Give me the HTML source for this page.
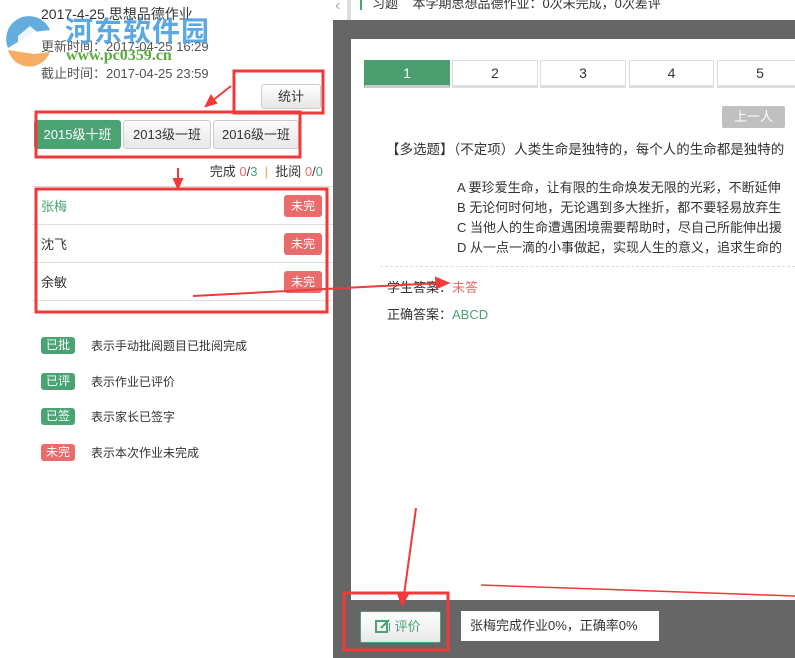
<!DOCTYPE html>
<html><head><meta charset="utf-8">
<style>
*{margin:0;padding:0;box-sizing:border-box}
body{width:795px;height:658px;overflow:hidden;background:#fff;font-family:"Liberation Sans","Noto Sans CJK SC",sans-serif;position:relative;color:#333}
.a{position:absolute;white-space:nowrap}
.badge{position:absolute;color:#fff;font-size:12px;text-align:center;border-radius:3px}
.g{background:#4aa373}.r{background:#e96b6b}
.tab{position:absolute;top:120px;height:29px;border:1px solid #ccc;border-radius:3px;background:linear-gradient(#fafafa,#e8e8e8);font-size:13px;line-height:27px;text-align:center;color:#333}
.num{position:absolute;top:60px;height:28px;border:1px solid #ddd;border-bottom:3px solid #ddd;font-size:14px;line-height:25px;text-align:center;background:#fff}
</style></head><body>
<div class="a" style="left:41px;top:4px;font-size:14px;color:#333">2017-4-25 思想品德作业</div>
<div class="a" style="left:41px;top:36px;font-size:13px;color:#555">更新时间：2017-04-25 16:29</div>
<div class="a" style="left:41px;top:63px;font-size:13px;color:#555">截止时间：2017-04-25 23:59</div>
<svg class="a" style="left:4px;top:10px" width="52" height="58" viewBox="0 0 52 58">
<path d="M4 38 A22 22 0 0 1 46 20 L30 22 Z" fill="#4a9fd8" opacity=".85"/>
<path d="M14 26 L26 16 L38 26 L38 38 L14 38 Z" fill="#fff" opacity=".9"/>
<path d="M4 40 A22 22 0 0 0 46 42 L30 44 Z" fill="#f5a04a" opacity=".85"/>
</svg>
<div class="a" style="left:65px;top:10px;font-size:28px;font-weight:bold;color:#4a9fe0;font-family:'Noto Sans CJK SC',sans-serif;opacity:.9;letter-spacing:1px">河东软件园</div>
<div class="a" style="left:66px;top:47px;font-size:16px;font-weight:bold;color:#5aab3c;font-family:'Liberation Serif',serif">www.pc0359.cn</div>

<div class="a" style="left:261px;top:84px;width:60px;height:25px;border:1px solid #ccc;border-radius:3px;background:linear-gradient(#fff,#e6e6e6);font-size:13px;line-height:23px;text-align:center">统计</div>

<div class="tab" style="left:34px;width:87px;background:#4aa373;color:#fff;border-color:#4aa373">2015级十班</div>
<div class="tab" style="left:123px;width:88px">2013级一班</div>
<div class="tab" style="left:213px;width:86px">2016级一班</div>

<div class="a" style="right:472px;top:161px;font-size:13px;color:#333">完成 <span style="color:#e96b6b">0</span>/<span style="color:#4aa373">3</span> &nbsp;<span style="color:#f0a040">|</span>&nbsp; 批阅 <span style="color:#e96b6b">0</span>/<span style="color:#4aa373">0</span></div>

<div class="a" style="left:32px;top:186px;width:301px;border-top:1px solid #ddd"></div>
<div class="a" style="left:32px;top:224px;width:301px;border-top:1px solid #ddd"></div>
<div class="a" style="left:32px;top:262px;width:301px;border-top:1px solid #ddd"></div>
<div class="a" style="left:32px;top:300px;width:301px;border-top:1px solid #ddd"></div>
<div class="a" style="left:41px;top:196px;font-size:13px;color:#4aa373">张梅</div>
<div class="a" style="left:41px;top:234px;font-size:13px">沈飞</div>
<div class="a" style="left:41px;top:272px;font-size:13px">余敏</div>
<div class="badge r" style="left:284px;top:195px;width:38px;height:22px;line-height:22px">未完</div>
<div class="badge r" style="left:284px;top:233px;width:38px;height:22px;line-height:22px">未完</div>
<div class="badge r" style="left:284px;top:271px;width:38px;height:22px;line-height:22px">未完</div>

<div class="badge g" style="left:41px;top:337px;width:34px;height:17px;line-height:17px">已批</div>
<div class="badge g" style="left:41px;top:373px;width:34px;height:17px;line-height:17px">已评</div>
<div class="badge g" style="left:41px;top:408px;width:34px;height:17px;line-height:17px">已签</div>
<div class="badge r" style="left:41px;top:444px;width:34px;height:17px;line-height:17px">未完</div>
<div class="a" style="left:91px;top:337px;font-size:12px">表示手动批阅题目已批阅完成</div>
<div class="a" style="left:91px;top:373px;font-size:12px">表示作业已评价</div>
<div class="a" style="left:91px;top:408px;font-size:12px">表示家长已签字</div>
<div class="a" style="left:91px;top:444px;font-size:12px">表示本次作业未完成</div>

<div class="a" style="left:333px;top:20px;width:18px;height:638px;background:#666"></div>
<div class="a" style="left:333px;top:20px;width:462px;height:19px;background:#666"></div>
<div class="a" style="left:333px;top:600px;width:462px;height:58px;background:#666"></div>
<div class="a" style="left:347px;top:0;width:4px;height:20px;background:#ddd"></div>
<div class="a" style="left:335px;top:-3px;font-size:16px;color:#aaa">‹</div>
<div class="a" style="left:360px;top:0;width:2px;height:10px;background:#4aa373"></div>
<div class="a" style="left:372px;top:-7px;font-size:13px;color:#333">习题 &nbsp;&nbsp;&nbsp;本学期思想品德作业：0次未完成，0次差评</div>

<div class="num" style="left:364px;width:86px;background:#4a9e6f;border-color:#4a9e6f;border-bottom-color:#ccc;color:#fff">1</div>
<div class="num" style="left:452px;width:86px">2</div>
<div class="num" style="left:540px;width:86px">3</div>
<div class="num" style="left:629px;width:85px">4</div>
<div class="num" style="left:717px;width:86px">5</div>

<div class="a" style="left:722px;top:106px;width:63px;height:22px;background:#c0c0c0;border-radius:2px;color:#fff;font-size:13px;line-height:22px;text-align:center">上一人</div>

<div class="a" style="left:386px;top:138px;font-size:13.5px">【多选题】（不定项）人类生命是独特的，每个人的生命都是独特的</div>
<div class="a" style="left:457px;top:178px;font-size:13px;line-height:20px">A 要珍爱生命，让有限的生命焕发无限的光彩，不断延伸<br>B 无论何时何地，无论遇到多大挫折，都不要轻易放弃生<br>C 当他人的生命遭遇困境需要帮助时，尽自己所能伸出援<br>D 从一点一滴的小事做起，实现人生的意义，追求生命的</div>
<div class="a" style="left:380px;top:266px;width:415px;border-top:1px dashed #ddd"></div>
<div class="a" style="left:387px;top:277px;font-size:13px">学生答案：<span style="color:#e96b6b">未答</span></div>
<div class="a" style="left:387px;top:304px;font-size:13px">正确答案：<span style="color:#4aa373">ABCD</span></div>

<div class="a" style="left:360px;top:611px;width:81px;height:32px;border:1px solid #4aa373;border-radius:2px;background:linear-gradient(#fff,#e8e8e8);font-size:13px;line-height:30px;color:#4aa373;padding-left:14px">
<svg width="16" height="14" viewBox="0 0 16 14" style="vertical-align:-2px"><rect x="1" y="2" width="11" height="11" fill="none" stroke="#4aa373" stroke-width="2"/><path d="M6 9 L14 1" stroke="#4aa373" stroke-width="2"/><rect x="14" y="4" width="1" height="8" fill="#4aa373"/></svg> 评价</div>
<div class="a" style="left:461px;top:611px;width:198px;height:30px;background:#fff;font-size:13px;line-height:30px;padding-left:9px">张梅完成作业0%，正确率0%</div>

<svg class="a" style="left:0;top:0" width="795" height="658">
<g fill="none" stroke="#f03a3a" stroke-width="3">
<rect x="234" y="71" width="89" height="42"/>
<rect x="36" y="112" width="264" height="45"/>
<rect x="36" y="189" width="291" height="123"/>
<rect x="344" y="593" width="104" height="57"/>
</g>
<g stroke="#f03a3a" stroke-width="2" fill="#f03a3a">
<line x1="231" y1="86" x2="212" y2="101"/><path d="M206 106 L211 96 L216 103 Z"/>
<line x1="178" y1="168" x2="178" y2="180"/><path d="M178 188 L174 179 L182 179 Z"/>
<line x1="193" y1="296" x2="440" y2="283"/><path d="M448 283 L436 278 L437 288 Z"/>
<line x1="416" y1="508" x2="404" y2="595"/><path d="M402 605 L398 593 L408 594 Z"/>
<line x1="481" y1="585" x2="795" y2="596" stroke-width="1.5"/>
</g>
</svg>
</body></html>
